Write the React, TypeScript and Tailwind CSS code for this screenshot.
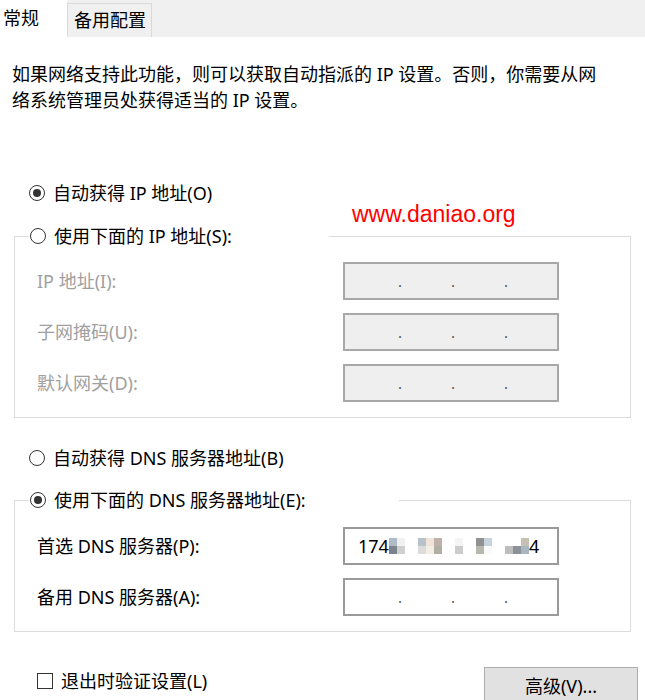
import React from "react";

const font = { fontFamily: '"Noto Sans", "Noto Sans CJK SC", sans-serif' };

function Radio({ checked }: { checked?: boolean }) {
  return (
    <span className="flex h-[16px] w-[16px] shrink-0 items-center justify-center rounded-full border border-[#333] bg-white">
      {checked && <span className="h-[8px] w-[8px] rounded-full bg-[#333]" />}
    </span>
  );
}

function IpBox({ disabled, value }: { disabled?: boolean; value?: React.ReactNode }) {
  return (
    <div
      className={
        "flex h-[38px] w-[216px] items-center border-2 " +
        (disabled ? "border-[#a8a8a8] bg-[#efefef]" : "border-[#9a9a9a] bg-white")
      }
    >
      {value ? (
        value
      ) : (
        <div className="grid w-full grid-cols-4 text-[15px] leading-none">
          <span />
          <span className="text-[#555]">.</span>
          <span className="text-[#555]">.</span>
          <span className="text-[#555]">.</span>
        </div>
      )}
    </div>
  );
}

function Mosaic() {
  // pixelated (hidden) part of the DNS address
  return (
    <span className="flex items-center gap-[13px]">
      <span className="grid grid-cols-2">
        <span className="h-[8px] w-[8px] bg-[#aebcc8]" />
        <span className="h-[8px] w-[8px] bg-[#f1f1f1]" />
        <span className="h-[8px] w-[8px] bg-[#7b848c]" />
        <span className="h-[8px] w-[8px] bg-[#cfcfcf]" />
      </span>
      <span className="grid grid-cols-3">
        <span className="h-[8px] w-[8px] bg-[#b7c3c9]" />
        <span className="h-[8px] w-[8px] bg-[#efe3da]" />
        <span className="h-[8px] w-[8px] bg-[#bfb0a8]" />
        <span className="h-[8px] w-[8px] bg-[#dcdcdc]" />
        <span className="h-[8px] w-[8px] bg-[#f5eee4]" />
        <span className="h-[8px] w-[8px] bg-[#b1aea4]" />
      </span>
      <span className="grid grid-cols-1">
        <span className="h-[8px] w-[8px] bg-[#f4f4f4]" />
        <span className="h-[8px] w-[8px] bg-[#cccccc]" />
      </span>
      <span className="grid grid-cols-2">
        <span className="h-[8px] w-[8px] bg-[#8f9193]" />
        <span className="h-[8px] w-[8px] bg-[#c7d3dd]" />
        <span className="h-[8px] w-[8px] bg-[#b9b8ac]" />
        <span className="h-[8px] w-[8px] bg-[#fafafa]" />
      </span>
      <span className="grid grid-cols-3">
        <span className="h-[8px] w-[8px] bg-white" />
        <span className="h-[8px] w-[8px] bg-white" />
        <span className="h-[8px] w-[8px] bg-[#c6c0b4]" />
        <span className="h-[8px] w-[8px] bg-[#bdbdbd]" />
        <span className="h-[8px] w-[8px] bg-[#8b9196]" />
        <span className="h-[8px] w-[8px] bg-[#a9b6c0]" />
      </span>
    </span>
  );
}

export default function App() {
  return (
    <div className="relative h-[700px] w-[645px] overflow-hidden bg-white text-[18px] text-black" style={font}>
      {/* Tabs */}
      <div className="flex h-[37px] bg-[#f0f0f0]">
        <div className="flex h-[37px] w-[67px] items-center bg-white pl-[3px]">常规</div>
        <div className="mt-[3px] flex h-[34px] w-[85px] items-center border border-b-0 border-[#d9d9d9] bg-[#f0f0f0] pl-[6px]">
          备用配置
        </div>
      </div>

      <p className="ml-[12px] mt-[24px] leading-[26px]">
        如果网络支持此功能，则可以获取自动指派的 IP 设置。否则，你需要从网
        <br />
        络系统管理员处获得适当的 IP 设置。
      </p>

      <div className="ml-[29px] mt-[68px] flex h-[24px] items-center gap-[8px]">
        <Radio checked />
        <span>自动获得 IP 地址(O)</span>
      </div>

      <fieldset className="mx-[14px] mt-[19px] border border-[#dcdcdc] p-0">
        <legend className="ml-[14px] flex h-[24px] w-[300px] items-center gap-[8px] bg-white pl-[1px]">
          <Radio />
          <span>使用下面的 IP 地址(S):</span>
        </legend>
        <div className="grid grid-cols-[306px_216px] items-center gap-y-[13px] pb-[15px] pl-[22px] pt-[14px] text-[#a0a0a0]">
          <span>IP 地址(I):</span>
          <IpBox disabled />
          <span>子网掩码(U):</span>
          <IpBox disabled />
          <span>默认网关(D):</span>
          <IpBox disabled />
        </div>
      </fieldset>

      <div className="ml-[29px] mt-[28px] flex h-[24px] items-center gap-[8px]">
        <Radio />
        <span>自动获得 DNS 服务器地址(B)</span>
      </div>

      <fieldset className="mx-[14px] mt-[18px] border border-[#dcdcdc] p-0">
        <legend className="ml-[14px] flex h-[24px] w-[370px] items-center gap-[8px] bg-white pl-[1px]">
          <Radio checked />
          <span>使用下面的 DNS 服务器地址(E):</span>
        </legend>
        <div className="grid grid-cols-[306px_216px] items-center gap-y-[13px] pb-[15px] pl-[22px] pt-[15px]">
          <span>首选 DNS 服务器(P):</span>
          <IpBox
            value={
              <div className="flex items-center pl-[13px]">
                <span>174</span>
                <Mosaic />
                <span>4</span>
              </div>
            }
          />
          <span>备用 DNS 服务器(A):</span>
          <IpBox />
        </div>
      </fieldset>

      <div className="mt-[35px] flex items-start justify-between pl-[37px] pr-[7px]">
        <div className="mt-[2px] flex h-[24px] items-center gap-[8px]">
          <span className="h-[16px] w-[16px] border-[1.5px] border-[#333] bg-white" />
          <span>退出时验证设置(L)</span>
        </div>
        <button className="h-[38px] w-[154px] border border-[#adadad] bg-[#e1e1e1]">高级(V)...</button>
      </div>

      {/* watermark */}
      <div
        className="absolute left-[352px] top-[203px] text-[23px] leading-none text-[#ff0000]"
        style={{ fontFamily: '"Liberation Sans", Arial, sans-serif' }}
      >
        www.daniao.org
      </div>
    </div>
  );
}
